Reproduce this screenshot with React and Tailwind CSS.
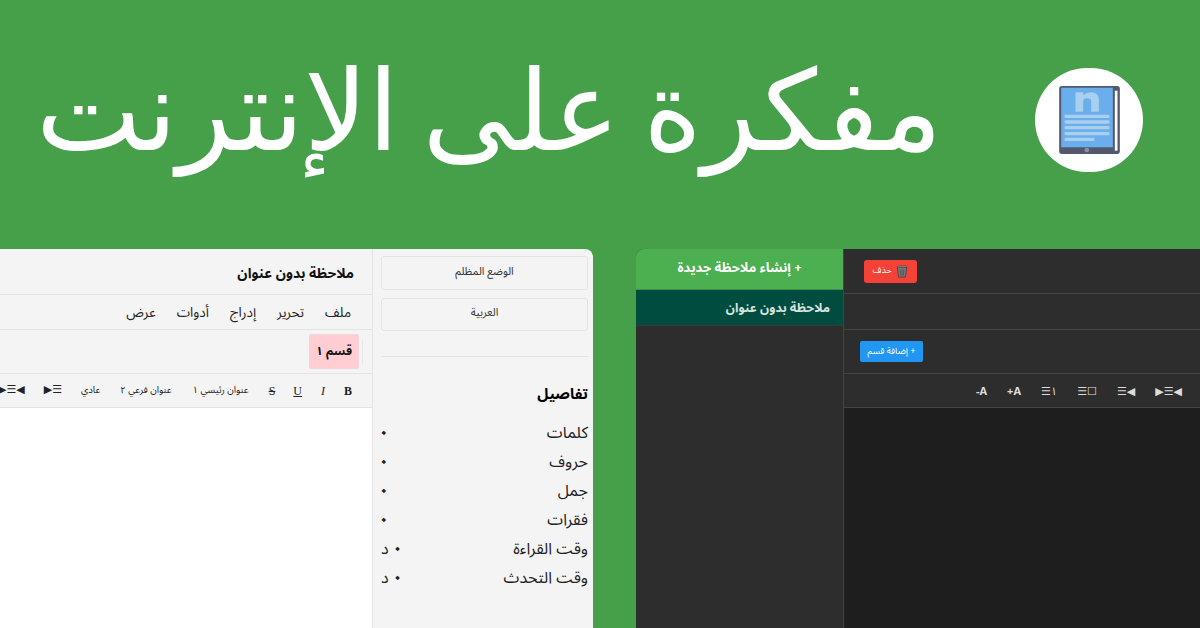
function Logo() {
  return (
    <svg viewBox="116 78 182 204" width="61" height="68">
      <rect x="116" y="78" width="182" height="204" rx="8" fill="#54586c" />
      <rect x="283" y="92" width="8" height="180" fill="#ffffff" />
      <path d="M122 83H277V262H122Z" fill="#6aaeee" />
      <path d="M165 97H188V105Q197 97 212 97Q235 97 235 120V155H212V125Q212 115 200 115Q188 115 188 125V155H165Z" fill="#a9cfee" />
      <g fill="#a9cfee">
        <rect x="132" y="164" width="135" height="10" rx="4" />
        <rect x="132" y="181" width="135" height="10" rx="4" />
        <rect x="132" y="198" width="135" height="10" rx="4" />
        <rect x="132" y="216" width="135" height="10" rx="4" />
        <rect x="132" y="233" width="90" height="10" rx="4" />
      </g>
      <circle cx="199" cy="270" r="7" fill="#8a90a8" />
    </svg>
  );
}

function Bin() {
  return (
    <svg viewBox="0 0 12 14" width="12" height="13">
      <path d="M1 2.5H11L9.8 13H2.2Z" fill="#77787a" stroke="#3a3a3a" strokeWidth="0.8" />
      <rect x="1" y="1" width="10" height="1.6" rx="0.6" fill="#8d8e90" stroke="#3a3a3a" strokeWidth="0.5" />
      <path d="M4 4.5L4.5 11.5M6 4.5V11.5M8 4.5L7.5 11.5" stroke="#4a4a4a" strokeWidth="0.7" />
    </svg>
  );
}

const stats = [
  ["كلمات", ""],
  ["حروف", ""],
  ["جمل", ""],
  ["فقرات", ""],
  ["وقت القراءة", "د"],
  ["وقت التحدث", "د"],
];

function LightPanel() {
  return (
    <div dir="rtl" className="w-[593px] h-[379px] shrink-0 flex overflow-hidden rounded-tr-[8px] bg-[#f4f4f4] text-[#111]">
      <aside className="w-[221px] shrink-0 border-l border-[#e4e4e4] pr-[5px] pl-[8px] pt-[7px] flex flex-col">
        <div className="h-[34px] pb-[2px] flex items-center justify-center rounded-[3px] border border-[#e4e4e4] text-[11px] text-[#333]">الوضع المظلم</div>
        <div className="mt-[8px] h-[33px] pb-[2px] flex items-center justify-center rounded-[3px] border border-[#e4e4e4] text-[11px] text-[#333]">العربية</div>
        <div className="mt-[25px] border-t border-[#e4e4e4]" />
        <h2 className="mt-[25px] text-[15px] leading-[24px] font-bold text-black">تفاصيل</h2>
        <ul className="mt-[12px] flex flex-col text-[16px] text-[#222]">
          {stats.map(([k, v]) => (
            <li key={k} className="h-[29px] flex items-center justify-between">
              <span>{k}</span>
              {v ? (
                <span className="flex items-center gap-[3px]">
                  <span className="text-[20px] font-bold leading-none">٠</span>
                  <span>{v}</span>
                </span>
              ) : (
                <span className="-ml-[3px] text-[20px] font-bold leading-none">٠</span>
              )}
            </li>
          ))}
        </ul>
      </aside>
      <div dir="rtl" className="w-[372px] shrink-0 flex flex-col">
        <div className="h-[46px] pt-[3px] shrink-0 border-b border-[#e4e4e4] flex items-center pr-[18px] text-[14px] font-bold text-[#111]">ملاحظة بدون عنوان</div>
        <nav className="h-[35px] pt-[3px] shrink-0 border-b border-[#e4e4e4] flex items-center pr-[21px] gap-[21px] text-[13.5px] text-[#222]">
          <span>ملف</span><span>تحرير</span><span>إدراج</span><span>أدوات</span><span>عرض</span>
        </nav>
        <div className="h-[44px] shrink-0 border-b border-[#e4e4e4] flex items-center pr-[9px] gap-[3px]">
          <div className="w-px h-[24px] bg-[#e8e8e8]" />
          <div className="w-[50px] h-[35px] flex items-center justify-center rounded-[2px] bg-[#ffcdd2] text-[12px] font-bold text-[#111] border border-[#f2d6d9]">قسم ١</div>
        </div>
        <div className="h-[34px] shrink-0 border-b border-[#e4e4e4] flex items-center pr-[20px] text-[#222] whitespace-nowrap">
          <span className="font-['Liberation_Serif',serif] font-bold text-[12px]">B</span>
          <span className="mr-[19px] font-['Liberation_Serif',serif] italic text-[12px]">I</span>
          <span className="mr-[19px] font-['Liberation_Serif',serif] underline text-[12px]">U</span>
          <span className="mr-[18px] font-['Liberation_Serif',serif] line-through text-[12px]">S</span>
          <span className="mr-[20px] text-[9.5px]">عنوان رئيسي ١</span>
          <span className="mr-[21px] text-[9.5px]">عنوان فرعي ٢</span>
          <span className="mr-[20px] text-[9.5px]">عادي</span>
          <span className="mr-[19px] text-[11px]">☰▶</span>
          <span className="mr-[19px] text-[11px]">◀☰▶</span>
        </div>
        <div className="flex-1 bg-white" />
      </div>
    </div>
  );
}

function DarkPanel() {
  return (
    <div dir="rtl" className="w-[564px] h-[379px] shrink-0 flex flex-row-reverse overflow-hidden rounded-tl-[8px] bg-[#2d2d2d] text-white">
      <aside className="w-[207px] shrink-0 flex flex-col">
        <div className="h-[40px] flex items-center justify-center bg-[#4caf50] text-[13px] font-bold">+ إنشاء ملاحظة جديدة</div>
        <div className="h-[36px] pt-[1px] flex items-center pr-[13px] bg-[#004d40] text-[12.5px] font-bold text-[#d8e2df] border-t border-[#3d8f4a]">ملاحظة بدون عنوان</div>
        <div className="flex-1 border-t border-[#3a3a3a]" />
      </aside>
      <div className="flex-1 border-l border-[#444] flex flex-col">
        <div className="h-[45px] shrink-0 border-b border-[#444] flex items-center justify-end pl-[20px]">
          <div className="w-[53px] h-[23px] flex items-center justify-center gap-[5px] rounded-[3px] bg-[#f44336] text-[9px]"><Bin /><span>حذف</span></div>
        </div>
        <div className="h-[36px] shrink-0 border-b border-[#444]" />
        <div className="h-[44px] shrink-0 border-b border-[#444] flex items-center justify-end pl-[16px]">
          <div className="w-[63px] h-[21px] flex items-center justify-center rounded-[2px] bg-[#2196f3] text-[9px]">+ إضافة قسم</div>
        </div>
        <div className="h-[34px] pt-[3px] shrink-0 border-b border-[#444] flex items-center pr-[18px] gap-[20px] text-[11px] text-[#ddd] whitespace-nowrap">
          <span>◀☰▶</span>
          <span>◀☰</span>
          <span>☐☰</span>
          <span>١☰</span>
          <span dir="ltr" className="font-bold">+A</span>
          <span dir="ltr" className="font-bold">-A</span>
        </div>
        <div className="flex-1 bg-[#1e1e1e]" />
      </div>
    </div>
  );
}

export default function App() {
  return (
    <div className="w-[1200px] h-[628px] overflow-hidden bg-[#46a04a] font-['Noto_Sans_Arabic','DejaVu_Sans',sans-serif]">
      <header className="h-[249px] flex items-center justify-between pl-[36px] pr-[57px] pb-[9px]">
        <h1 dir="rtl" className="mb-[18px] text-white text-[112px] leading-none font-normal whitespace-nowrap font-['DejaVu_Sans',sans-serif] [word-spacing:-12px]">مفكرة على الإنترنت</h1>
        <div className="w-[108px] h-[104px] rounded-full bg-white flex items-center justify-center"><Logo /></div>
      </header>
      <div className="flex justify-between">
        <LightPanel />
        <DarkPanel />
      </div>
    </div>
  );
}
